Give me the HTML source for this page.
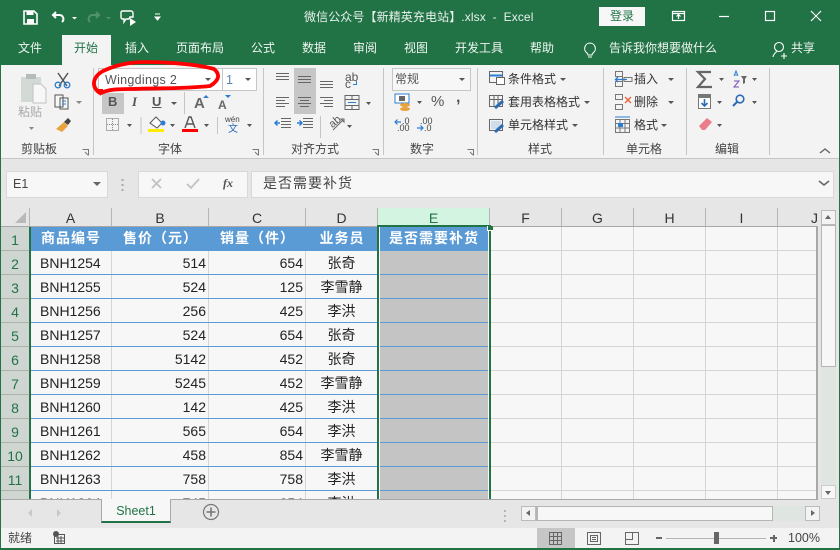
<!DOCTYPE html>
<html><head><meta charset="utf-8">
<style>
html,body{margin:0;padding:0}
#p{position:relative;width:840px;height:550px;overflow:hidden;background:#e6e6e6;font-family:"Liberation Sans","Noto Sans CJK SC",sans-serif;font-size:12px;color:#333}
#p div,#p span.a,#p svg{position:absolute}
.t{white-space:nowrap;line-height:16px}
.tab{color:#f0f5f1;top:34px;line-height:28px;font-size:12px;white-space:nowrap}
.rl{font-size:12px;color:#444;top:141px;line-height:16px;white-space:nowrap}
.sep{width:1px;background:#c6c6c6;top:68px;height:87px}
.caret{width:0;height:0;border-left:3px solid transparent;border-right:3px solid transparent;border-top:3px solid #555}
.c{font-size:14px;line-height:23px;height:23px;color:#222;white-space:nowrap}
.ch{font-size:14px;letter-spacing:1px;line-height:23px;height:23px;color:#fff;font-weight:bold;text-align:center;background:#5b9bd5;top:227px;white-space:nowrap}
.r{text-align:right}.m{text-align:center}
.hl{left:30px;height:1px;width:460px;background:#5b9bd5}
.gl{left:490px;height:1px;width:327px;background:#d6d6d6}
.vl{width:1px;top:227px;height:272px;background:#d6d6d6}
.cl{top:208px;height:18px;line-height:21px;font-size:14px;color:#333;text-align:center;background:#e6e6e6;border-right:1px solid #b5b5b5;box-sizing:content-box}
.rh{left:1px;width:28px;height:23px;line-height:27px;font-size:14px;color:#217346;text-align:center;background:#cfd6d2;border-bottom:1px solid #aab3ae}
</style></head><body>
<div id="p">
<!-- title bar -->
<div style="left:0;top:0;width:840px;height:65px;background:#217346"></div>
<svg style="left:0;top:0" width="170" height="30" viewBox="0 0 170 30" fill="none">
<path d="M24 11h10l3 3v10H24z" stroke="#fff" stroke-width="1.6"/><rect x="26.500" y="11" width="7" height="4" fill="#fff"/><rect x="27" y="19" width="7" height="5" fill="#fff"/>
<path d="M56 12l-3 3 3 3M53 15h6a4 4 0 0 1 3 7" stroke="#fff" stroke-width="2"/><path d="M72 17h5l-2.500 2.500z" fill="#fff"/>
<path d="M96 12l3 3-3 3M99 15h-6a4 4 0 0 0-3 7" stroke="#4f9270" stroke-width="2"/><path d="M106 17h5l-2.500 2.500z" fill="#4f9270"/>
<path d="M122 11h9a2 2 0 0 1 2 2v4h-3l-1 2h-3l-2 3v-3h-2a2 2 0 0 1-1-2v-5z" stroke="#fff" stroke-width="1.400"/><path d="M130 18l6 4-6 4z" fill="#fff"/>
<path d="M155 14h5M155 17h5l-2.500 3z" stroke="#fff" stroke-width="1" fill="#fff"/>
</svg>
<div class="t" style="left:304px;top:9px;color:#e8f1ec;font-size:12px;letter-spacing:.1px">微信公众号【新精英充电站】.xlsx&nbsp; -&nbsp; Excel</div>
<div style="left:599px;top:7px;width:46px;height:19px;background:#f7f7f7;color:#217346;text-align:center;line-height:19px;font-size:12px">登录</div>
<svg style="left:660px;top:0" width="180" height="30" viewBox="0 0 180 30" fill="none" stroke="#fff" stroke-width="1.200">
<rect x="12.500" y="11.500" width="12" height="9"/><path d="M12.500 13.500h12M18.500 19v-4M16.500 16.500l2-2 2 2"/>
<path d="M59 16.500h10"/><rect x="105.500" y="11.500" width="9" height="9"/><path d="M151 11l10 10M161 11l-10 10"/>
</svg>
<!-- tabs -->
<div style="left:62px;top:35px;width:49px;height:30px;background:#f3f3f3"></div>
<div class="tab" style="left:18px">文件</div>
<div class="tab" style="left:74px;color:#217346">开始</div>
<div class="tab" style="left:125px">插入</div>
<div class="tab" style="left:176px">页面布局</div>
<div class="tab" style="left:251px">公式</div>
<div class="tab" style="left:302px">数据</div>
<div class="tab" style="left:353px">审阅</div>
<div class="tab" style="left:404px">视图</div>
<div class="tab" style="left:455px">开发工具</div>
<div class="tab" style="left:530px">帮助</div>
<svg style="left:580px;top:40px" width="20" height="20" viewBox="0 0 20 20" fill="none" stroke="#fff" stroke-width="1.100"><path d="M10 3a5.500 5.500 0 0 0-3 10c.8.700 1 1.500 1 2h4c0-.5.200-1.300 1-2a5.500 5.500 0 0 0-3-10zM8 17h4"/></svg>
<div class="tab" style="left:609px">告诉我你想要做什么</div>
<svg style="left:770px;top:40px" width="20" height="20" viewBox="0 0 20 20" fill="none" stroke="#fff" stroke-width="1.100"><circle cx="9" cy="7" r="4.500"/><path d="M3 17c.5-3 3-5 4-5.500M11 16h6M14 13v6"/></svg>
<div class="tab" style="left:791px">共享</div>
<!-- ribbon -->
<div style="left:1px;top:65px;width:838px;height:93px;background:#f3f3f3;border-bottom:1px solid #c6c6c6"></div>
<div class="sep" style="left:93px"></div><div class="sep" style="left:263px"></div><div class="sep" style="left:383px"></div><div class="sep" style="left:477px"></div><div class="sep" style="left:603px"></div><div class="sep" style="left:686px"></div><div class="sep" style="left:769px"></div>
<!-- clipboard -->
<svg style="left:0;top:65px" width="95" height="75" viewBox="0 0 95 75" fill="none">
<rect x="21" y="12" width="20" height="25" fill="#d3d9d5"/><rect x="26" y="9" width="10" height="5" fill="#b6bdb8"/><path d="M33 19h8l5 5v14H33z" fill="#f7f7f7" stroke="#c2c2c2"/>
<path d="M58 8l9 13M68 8l-9 13" stroke="#555" stroke-width="1.500"/><circle cx="58" cy="20" r="2.800" stroke="#2b7cd3" stroke-width="1.300"/><circle cx="67" cy="20" r="2.800" stroke="#2b7cd3" stroke-width="1.300"/>
<path d="M55 30h8v12h-8zM60 33h8v11h-8z" fill="#f7f7f7" stroke="#555"/><path d="M62 36h4M62 39h4" stroke="#2b7cd3"/>
<path d="M56 64l8-7 4 4-6 6z" fill="#e8a33d"/><path d="M64 57l4-4 3 3-3 4z" fill="#444"/>
<path d="M76 36h6l-3 3zM29 62h5l-2.500 3z" fill="#888"/>
</svg>
<div class="t" style="left:18px;top:104px;color:#a8a8a8">粘贴</div>
<div class="rl" style="left:21px">剪贴板</div>
<!-- font -->
<div style="left:98px;top:68px;width:123px;height:21px;background:#fff;border:1px solid #c6c6c6"></div>
<div style="left:222px;top:68px;width:33px;height:21px;background:#fff;border:1px solid #c6c6c6"></div>
<div class="t" style="left:105px;top:72px;font-size:12.500px;color:#555;letter-spacing:.3px">Wingdings 2</div>
<div class="t" style="left:226px;top:72px;font-size:12.500px;color:#5a7fb0">1</div>
<div class="caret" style="left:205px;top:78px"></div><div class="caret" style="left:245px;top:78px"></div>
<div style="left:102px;top:93px;width:22px;height:21px;background:#c6c6c6"></div>
<div class="t" style="left:108px;top:94px;font-weight:bold;font-size:13px;color:#555">B</div>
<div class="t" style="left:132px;top:94px;font-style:italic;font-size:13px;font-family:'Liberation Serif',serif;font-weight:bold;color:#555">I</div>
<div class="t" style="left:152px;top:94px;font-weight:bold;font-size:13px;color:#555;text-decoration:underline">U</div>
<div class="caret" style="left:171px;top:102px"></div>
<div style="left:184px;top:92px;width:1px;height:22px;background:#c6c6c6"></div>
<div class="t" style="left:194px;top:96px;font-size:15px;font-weight:bold;color:#666">A</div><div class="t" style="left:218px;top:97px;font-size:12px;font-weight:bold;color:#666">A</div>
<svg style="left:0;top:90px" width="260" height="50" viewBox="0 0 260 50" fill="none">
<path d="M203 8h6l-3-3zM225 5h6l-3 3z" fill="#2b7cd3"/>
<rect x="106.500" y="28.500" width="12" height="12" stroke="#666" stroke-dasharray="1 1"/><path d="M112.500 29v12M107 34.500h12" stroke="#888" stroke-dasharray="1 1"/>
<path d="M127 34h5l-2.500 3zM170 34h5l-2.500 3zM204 34h5l-2.500 3zM247 34h5l-2.500 3z" fill="#555"/>
<path d="M150 33l6-6 6 6-5 5z" fill="#fff" stroke="#555"/><circle cx="163" cy="33" r="2.500" fill="#2b7cd3"/><rect x="148" y="39" width="16" height="3" fill="#ffec00"/>
<rect x="182" y="39" width="16" height="3" fill="#f00"/><path d="M185 38l4-11h2l4 11M187 34h6" stroke="#555" stroke-width="1.400"/>
<path d="M141 27v17M217.500 27v17" stroke="#c6c6c6"/>
</svg>
<div class="t" style="left:225px;top:115px;font-size:8px;color:#444;line-height:10px">wén</div>
<div class="t" style="left:228px;top:124px;font-size:10px;color:#2b6cb5;line-height:12px">文</div>
<div class="rl" style="left:158px">字体</div>
<!-- red oval -->
<svg style="left:90px;top:56px" width="150" height="44" viewBox="0 0 150 44" fill="none"><path d="M10 37C2 32 1 22 13 15C28 8 42 6 55 6C82 6 110 9 124 13C130 18 130 24 120 30C92 33 65 32 42 33C28 33 18 33 9 38" stroke="#f00" stroke-width="3.800"/><path d="M5 33h8v5H8z" fill="#f00"/></svg>
<!-- align -->
<div style="left:294px;top:68px;width:22px;height:46px;background:#c6c6c6"></div>
<svg style="left:270px;top:66px" width="115" height="72" viewBox="0 0 115 72" fill="none" stroke="#666">
<path d="M6 7.500h13M6 10.500h13M6 13.500h13M28 10.500h13M28 13.500h13M28 16.500h13M50 15.500h13M50 18.500h13M50 21.500h13"/>
<path d="M6 31.500h13M6 34.500h9M6 37.500h13M6 40.500h9M28 31.500h13M30 34.500h9M28 37.500h13M30 40.500h9M50 31.500h13M54 34.500h9M50 37.500h13M54 40.500h9"/>
<rect x="75" y="29.500" width="14" height="14"/><path d="M75 33.500h14M75 39.500h14M82 29.500v4M82 39.500v4"/><path d="M78 36.500h8" stroke="#2b7cd3"/>
<path d="M96 36h5l-2.500 3z" fill="#555" stroke="none"/>
<path d="M11 52.500h10M11 55.500h10M11 58.500h10M11 61.500h10M33 52.500h10M33 55.500h10M33 58.500h10M33 61.500h10"/>
<path d="M5 57h5M7.500 54.500L5 57l2.500 2.500M27 57h5M29.500 54.500L32 57l-2.500 2.500" stroke="#2b7cd3" stroke-width="1.500"/>
<path d="M50.500 50v22" stroke="#c6c6c6"/><path d="M63 64l10-10M74 53l-3 0 3 3z" stroke="#666"/>
<path d="M77 59h5l-2.500 3z" fill="#555" stroke="none"/>
</svg>
<div class="t" style="left:345px;top:71px;font-size:12px;color:#555;line-height:12px">ab</div>
<div class="t" style="left:345px;top:79px;font-size:12px;color:#555;line-height:10px">c</div>
<div style="left:353px;top:81px;width:3px;height:3px;border-right:1px solid #2b7cd3;border-bottom:1px solid #2b7cd3"></div>
<div class="t" style="left:329px;top:116px;font-size:11px;color:#555;transform:rotate(-40deg);line-height:12px">ab</div>
<div class="rl" style="left:291px">对齐方式</div>
<!-- number -->
<div style="left:392px;top:68px;width:77px;height:21px;background:#f7f7f7;border:1px solid #c6c6c6"></div>
<div class="t" style="left:395px;top:71px;color:#555">常规</div>
<div class="caret" style="left:459px;top:78px"></div>
<svg style="left:390px;top:90px" width="85" height="45" viewBox="0 0 85 45" fill="none">
<rect x="5" y="4" width="14" height="9" fill="#fff" stroke="#2b7cd3"/><rect x="9" y="6" width="6" height="5" fill="#666"/><ellipse cx="15" cy="15" rx="5" ry="2" fill="#e8a33d"/><ellipse cx="15" cy="19" rx="5" ry="2" fill="#e8a33d"/>
<path d="M27 11h5l-2.500 3z" fill="#555"/>
<path d="M11 32H5M7.500 29.500L5 32l2.500 2.500" stroke="#2b7cd3" stroke-width="1.200"/><path d="M27 38h6M30.500 35.500L33 38l-2.500 2.500" stroke="#2b7cd3" stroke-width="1.200"/>
</svg>
<div class="t" style="left:431px;top:94px;font-size:15px;color:#555;line-height:16px">%</div>
<div class="t" style="left:456px;top:90px;font-size:16px;font-weight:bold;color:#555;line-height:16px">,</div>
<div class="t" style="left:402px;top:117px;font-size:9px;color:#444;line-height:8px">.0</div>
<div class="t" style="left:397px;top:124px;font-size:9px;color:#444;line-height:8px">.00</div>
<div class="t" style="left:420px;top:117px;font-size:9px;color:#444;line-height:8px">.00</div>
<div class="t" style="left:424px;top:124px;font-size:9px;color:#444;line-height:8px">.0</div>
<div class="rl" style="left:410px">数字</div>
<!-- corner launchers -->
<svg style="left:0;top:145px" width="680" height="12" viewBox="0 0 680 12" fill="none" stroke="#777"><path d="M82.500 4.500h6v6M85 7l3 3M252.500 4.500h6v6M255 7l3 3M372.500 4.500h6v6M375 7l3 3M467.500 4.500h6v6M470 7l3 3"/></svg>
<!-- styles -->
<svg style="left:488px;top:70px" width="20" height="66" viewBox="0 0 20 66" fill="none" stroke="#666">
<rect x="1.500" y="1.500" width="13" height="11"/><path d="M1.500 5.500h13" stroke="#2b7cd3" stroke-width="2"/><rect x="8.500" y="7.500" width="8" height="7" fill="#fff"/>
<rect x="1.500" y="25.500" width="13" height="11"/><path d="M1.500 29.500h13M6 25v11M10 25v11"/><path d="M7 38l8-7" stroke="#2b6cb5" stroke-width="3"/>
<rect x="1.500" y="49.500" width="13" height="11"/><rect x="3" y="51" width="10" height="8" fill="#cfdcea" stroke="none"/><path d="M7 62l8-7" stroke="#2b6cb5" stroke-width="3"/>
</svg>
<div class="t" style="left:508px;top:71px">条件格式</div><div class="caret" style="left:560px;top:78px"></div>
<div class="t" style="left:508px;top:94px">套用表格格式</div><div class="caret" style="left:584px;top:101px"></div>
<div class="t" style="left:508px;top:117px">单元格样式</div><div class="caret" style="left:572px;top:124px"></div>
<div class="rl" style="left:528px">样式</div>
<!-- cells -->
<svg style="left:612px;top:70px" width="22" height="66" viewBox="0 0 22 66" fill="none" stroke="#777">
<path d="M3.500 1.500h7v5h-7zM3.500 11.500h7v5h-7zM3.500 11.500v5h7M10.500 6.500v5M12 7.500h8v4h-8z"/><path d="M15 9.500H3M6 7L3.500 9.500 6 12" stroke="#2b7cd3" stroke-width="1.300"/>
<path d="M3.500 24.500h7v5h-7zM3.500 34.500h7v5h-7z"/><path d="M13 27l6 6M19 27l-6 6" stroke="#e8663d" stroke-width="1.400"/>
<rect x="3.500" y="49.500" width="14" height="13"/><path d="M3.500 53.500h14M3.500 58h14M8 50v13M13 50v13"/><rect x="6" y="53" width="5" height="4" fill="#2b7cd3" stroke="none"/><path d="M3 47h15" stroke="#2b7cd3"/>
</svg>
<div class="t" style="left:634px;top:71px">插入</div><div class="caret" style="left:668px;top:78px"></div>
<div class="t" style="left:634px;top:94px">删除</div><div class="caret" style="left:668px;top:101px"></div>
<div class="t" style="left:634px;top:117px">格式</div><div class="caret" style="left:661px;top:124px"></div>
<div class="rl" style="left:626px">单元格</div>
<!-- editing -->
<svg style="left:694px;top:68px" width="70" height="68" viewBox="0 0 70 68" fill="none">
<path d="M17 4H4l7 7-7 8h14" stroke="#666" stroke-width="2.200"/>
<path d="M25 10h5l-2.500 3zM23 33h5l-2.500 3zM23 56h5l-2.500 3zM58 10h5l-2.500 3zM58 33h5l-2.500 3z" fill="#555"/>
<path d="M40 8l2-5 2 5M41 7h2" stroke="#2b7cd3"/><path d="M40 13h5l-5 6h5" stroke="#7a4fb5"/><path d="M47 8h6l-2 3v4l-2 1v-5z" fill="#666"/>
<rect x="4.500" y="26.500" width="12" height="14" fill="#fff" stroke="#777"/><rect x="4" y="26" width="13" height="4" fill="#777"/><path d="M10.500 31v7M7.500 35l3 3 3-3" stroke="#2b6cb5" stroke-width="1.600"/>
<circle cx="46" cy="31" r="3.800" stroke="#2b6cb5" stroke-width="1.600"/><path d="M43 34l-4 4" stroke="#2b6cb5" stroke-width="2"/>
<path d="M5 58l8-8 5 4-7 8H8z" fill="#ee7d8c"/>
</svg>
<div class="rl" style="left:715px">编辑</div>
<svg style="left:818px;top:146px" width="14" height="10" viewBox="0 0 14 10" fill="none"><path d="M2 7l5-4 5 4" stroke="#666" stroke-width="1.400"/></svg>
<!-- formula bar -->
<div style="left:1px;top:159px;width:838px;height:49px;background:#e6e6e6"></div>
<div style="left:6px;top:171px;width:100px;height:25px;background:#f7f7f7;border:1px solid #d8d8d8"></div>
<div class="t" style="left:13px;top:176px;color:#444;font-size:12.500px">E1</div>
<div style="left:93px;top:182px;width:0;height:0;border-left:4px solid transparent;border-right:4px solid transparent;border-top:4px solid #666"></div>
<svg style="left:120px;top:176px" width="8" height="18" viewBox="0 0 8 18"><path d="M2.500 3v2M2.500 8v2M2.500 13v2" stroke="#aaa" stroke-width="2"/></svg>
<div style="left:138px;top:171px;width:108px;height:25px;background:#f7f7f7;border:1px solid #d8d8d8"></div>
<svg style="left:148px;top:175px" width="70" height="18" viewBox="0 0 70 18" fill="none" stroke="#c2c2c2" stroke-width="1.800"><path d="M4 4l9 9M13 4l-9 9M39 9l4 4 8-9"/></svg>
<div class="t" style="left:223px;top:175px;font-family:'Liberation Serif',serif;font-style:italic;font-weight:bold;font-size:12px;color:#555">fx</div>
<div style="left:251px;top:171px;width:581px;height:25px;background:#f7f7f7;border:1px solid #d8d8d8"></div>
<div class="t" style="left:263px;top:175px;color:#444;font-size:14px;letter-spacing:1px">是否需要补货</div>
<svg style="left:817px;top:178px" width="14" height="10" viewBox="0 0 14 10" fill="none"><path d="M2 3l5 4 5-4" stroke="#666" stroke-width="1.600"/></svg>
<!-- sheet -->
<div style="left:1px;top:208px;width:816px;height:291px;background:#f7f7f7"></div>
<div style="left:1px;top:208px;width:28px;height:18px;background:#e6e6e6;border-right:1px solid #b5b5b5"></div>
<div style="left:15px;top:212px;width:0;height:0;border-left:11px solid transparent;border-bottom:11px solid #b9b9b9"></div>
<div class="cl" style="left:30px;width:81px">A</div>
<div class="cl" style="left:112px;width:96px">B</div>
<div class="cl" style="left:209px;width:96px">C</div>
<div class="cl" style="left:306px;width:71px">D</div>
<div class="cl" style="left:378px;width:111px;background:#d2f4e0;color:#217346">E</div>
<div class="cl" style="left:490px;width:71px">F</div>
<div class="cl" style="left:562px;width:71px">G</div>
<div class="cl" style="left:634px;width:71px">H</div>
<div class="cl" style="left:706px;width:71px">I</div>
<div class="cl" style="left:778px;width:39px;text-align:left;text-indent:33px;border-right:0;overflow:hidden">J</div>
<div style="left:1px;top:226px;width:816px;height:1px;background:#a8a8a8"></div>
<div class="rh" style="top:227px">1</div><div class="rh" style="top:251px">2</div><div class="rh" style="top:275px">3</div><div class="rh" style="top:299px">4</div><div class="rh" style="top:323px">5</div><div class="rh" style="top:347px">6</div><div class="rh" style="top:371px">7</div><div class="rh" style="top:395px">8</div><div class="rh" style="top:419px">9</div><div class="rh" style="top:443px">10</div><div class="rh" style="top:467px">11</div>
<div class="rh" style="top:491px;height:8px;border:0"></div>
<!-- grid -->
<div class="vl" style="left:111px"></div><div class="vl" style="left:208px"></div><div class="vl" style="left:305px"></div>
<div class="vl" style="left:561px"></div><div class="vl" style="left:633px"></div><div class="vl" style="left:705px"></div><div class="vl" style="left:777px"></div>
<div class="gl" style="top:250px"></div><div class="gl" style="top:274px"></div><div class="gl" style="top:298px"></div><div class="gl" style="top:322px"></div><div class="gl" style="top:346px"></div><div class="gl" style="top:370px"></div><div class="gl" style="top:394px"></div><div class="gl" style="top:418px"></div><div class="gl" style="top:442px"></div><div class="gl" style="top:466px"></div><div class="gl" style="top:490px"></div>
<div style="left:379px;top:251px;width:110px;height:248px;background:#c4c4c4"></div>
<div class="hl" style="top:250px"></div><div class="hl" style="top:274px"></div><div class="hl" style="top:298px"></div><div class="hl" style="top:322px"></div><div class="hl" style="top:346px"></div><div class="hl" style="top:370px"></div><div class="hl" style="top:394px"></div><div class="hl" style="top:418px"></div><div class="hl" style="top:442px"></div><div class="hl" style="top:466px"></div><div class="hl" style="top:490px"></div>
<div class="ch" style="left:30px;width:82px">商品编号</div>
<div class="ch" style="left:112px;width:97px">售价（元）</div>
<div class="ch" style="left:209px;width:97px">销量（件）</div>
<div class="ch" style="left:306px;width:72px">业务员</div>
<div class="ch" style="left:378px;width:112px">是否需要补货</div>
<!-- data -->
<div class="c" style="left:40px;top:252px">BNH1254</div><div class="c r" style="left:112px;width:94px;top:252px">514</div><div class="c r" style="left:209px;width:94px;top:252px">654</div><div class="c m" style="left:306px;width:71px;top:252px">张奇</div>
<div class="c" style="left:40px;top:276px">BNH1255</div><div class="c r" style="left:112px;width:94px;top:276px">524</div><div class="c r" style="left:209px;width:94px;top:276px">125</div><div class="c m" style="left:306px;width:71px;top:276px">李雪静</div>
<div class="c" style="left:40px;top:300px">BNH1256</div><div class="c r" style="left:112px;width:94px;top:300px">256</div><div class="c r" style="left:209px;width:94px;top:300px">425</div><div class="c m" style="left:306px;width:71px;top:300px">李洪</div>
<div class="c" style="left:40px;top:324px">BNH1257</div><div class="c r" style="left:112px;width:94px;top:324px">524</div><div class="c r" style="left:209px;width:94px;top:324px">654</div><div class="c m" style="left:306px;width:71px;top:324px">张奇</div>
<div class="c" style="left:40px;top:348px">BNH1258</div><div class="c r" style="left:112px;width:94px;top:348px">5142</div><div class="c r" style="left:209px;width:94px;top:348px">452</div><div class="c m" style="left:306px;width:71px;top:348px">张奇</div>
<div class="c" style="left:40px;top:372px">BNH1259</div><div class="c r" style="left:112px;width:94px;top:372px">5245</div><div class="c r" style="left:209px;width:94px;top:372px">452</div><div class="c m" style="left:306px;width:71px;top:372px">李雪静</div>
<div class="c" style="left:40px;top:396px">BNH1260</div><div class="c r" style="left:112px;width:94px;top:396px">142</div><div class="c r" style="left:209px;width:94px;top:396px">425</div><div class="c m" style="left:306px;width:71px;top:396px">李洪</div>
<div class="c" style="left:40px;top:420px">BNH1261</div><div class="c r" style="left:112px;width:94px;top:420px">565</div><div class="c r" style="left:209px;width:94px;top:420px">654</div><div class="c m" style="left:306px;width:71px;top:420px">李洪</div>
<div class="c" style="left:40px;top:444px">BNH1262</div><div class="c r" style="left:112px;width:94px;top:444px">458</div><div class="c r" style="left:209px;width:94px;top:444px">854</div><div class="c m" style="left:306px;width:71px;top:444px">李雪静</div>
<div class="c" style="left:40px;top:468px">BNH1263</div><div class="c r" style="left:112px;width:94px;top:468px">758</div><div class="c r" style="left:209px;width:94px;top:468px">758</div><div class="c m" style="left:306px;width:71px;top:468px">李洪</div>
<div class="c" style="left:40px;top:492px">BNH1264</div><div class="c r" style="left:112px;width:94px;top:492px">745</div><div class="c r" style="left:209px;width:94px;top:492px">254</div><div class="c m" style="left:306px;width:71px;top:492px">李洪</div>
<!-- A column left green edge and selection -->
<div style="left:29px;top:227px;width:2px;height:272px;background:#217346"></div>
<div style="left:377px;top:225px;width:114px;height:276px;border:2px solid #217346;box-sizing:border-box;border-bottom:0"></div>
<div style="left:379px;top:227px;width:1px;height:272px;background:#fff"></div>
<div style="left:488px;top:227px;width:1px;height:272px;background:#fff"></div>
<div style="left:487px;top:226px;width:6px;height:5px;background:#217346;border-bottom:1px solid #fff;border-left:1px solid #fff;box-sizing:border-box"></div>
<!-- vertical scrollbar -->
<div style="left:817px;top:208px;width:22px;height:291px;background:#e6e6e6"></div>
<div style="left:816px;top:226px;width:2px;height:273px;background:#a8a8a8"></div>
<div style="left:821px;top:225px;width:15px;height:142px;background:#f7f7f7;border:1px solid #b5b5b5;box-sizing:border-box"></div>
<div style="left:821px;top:367px;width:15px;height:118px;background:#dfe6e1"></div>
<div style="left:821px;top:210px;width:15px;height:15px;background:#f3f3f3;border:1px solid #bbb;box-sizing:border-box"></div>
<div style="left:825px;top:215px;width:0;height:0;border-left:3.500px solid transparent;border-right:3.500px solid transparent;border-bottom:4px solid #666"></div>
<div style="left:821px;top:485px;width:15px;height:14px;background:#f7f7f7;border:1px solid #ccc;box-sizing:border-box"></div>
<div style="left:825px;top:491px;width:0;height:0;border-left:3.500px solid transparent;border-right:3.500px solid transparent;border-top:4px solid #666"></div>
<div style="left:1px;top:499px;width:817px;height:1px;background:#a8a8a8"></div>
<!-- sheet tabs -->
<div style="left:1px;top:500px;width:838px;height:28px;background:#e6e6e6"></div>
<div style="left:28px;top:509px;width:0;height:0;border-top:4px solid transparent;border-bottom:4px solid transparent;border-right:4px solid #c8c8c8"></div>
<div style="left:57px;top:509px;width:0;height:0;border-top:4px solid transparent;border-bottom:4px solid transparent;border-left:4px solid #c8c8c8"></div>
<div style="left:101px;top:499px;width:68px;height:22px;background:#f7f7f7;border-left:1px solid #a8a8a8;border-right:1px solid #a8a8a8;border-bottom:2px solid #217346;color:#217346;text-align:center;line-height:24px;font-size:12.500px">Sheet1</div>
<svg style="left:202px;top:503px" width="18" height="18" viewBox="0 0 18 18" fill="none" stroke="#777"><circle cx="9" cy="9" r="7.500" stroke-width="1.200"/><path d="M9 4.500v9M4.500 9h9" stroke-width="1.600"/></svg>
<svg style="left:502px;top:507px" width="6" height="18" viewBox="0 0 6 18"><path d="M3 3v2M3 8v2M3 13v2" stroke="#b5b5b5" stroke-width="2"/></svg>
<div style="left:521px;top:506px;width:252px;height:15px;background:#f7f7f7;border:1px solid #b5b5b5;box-sizing:border-box"></div>
<div style="left:773px;top:506px;width:33px;height:15px;background:#dfe6e1"></div>
<div style="left:521px;top:506px;width:15px;height:15px;background:#f3f3f3;border:1px solid #bbb;box-sizing:border-box"></div>
<div style="left:526px;top:510px;width:0;height:0;border-top:3.500px solid transparent;border-bottom:3.500px solid transparent;border-right:4px solid #666"></div>
<div style="left:536px;top:506px;width:2px;height:15px;background:#b5b5b5"></div>
<div style="left:805px;top:506px;width:15px;height:15px;background:#f3f3f3;border:1px solid #bbb;box-sizing:border-box"></div>
<div style="left:811px;top:510px;width:0;height:0;border-top:3.500px solid transparent;border-bottom:3.500px solid transparent;border-left:4px solid #666"></div>
<!-- status -->
<div style="left:1px;top:528px;width:838px;height:20px;background:#f3f3f3"></div>
<div class="t" style="left:8px;top:530px;font-size:12px;color:#444">就绪</div>
<svg style="left:50px;top:530px" width="17" height="16" viewBox="0 0 17 16" fill="none"><circle cx="6" cy="4" r="3" fill="#555"/><rect x="4.500" y="4.500" width="10" height="9" stroke="#555"/><path d="M6 8h8M6 11h8M8 6v7M11 6v7" stroke="#555"/></svg>
<div style="left:537px;top:528px;width:38px;height:20px;background:#c6c6c6"></div>
<svg style="left:545px;top:530px" width="170" height="16" viewBox="0 0 170 16" fill="none" stroke="#666">
<path d="M4.500 2.500h12v12h-12zM4.500 6.500h12M4.500 10.500h12M8.500 2.500v12M12.500 2.500v12"/>
<path d="M42.500 2.500h13v12h-13zM45.500 5.500h7v6h-7zM47 7.500h4M47 9.500h4"/>
<path d="M80.500 2.500h13v12h-13zM80.500 9.500h7v-7"/>
</svg>
<div style="left:656px;top:537px;width:6px;height:2px;background:#666"></div>
<div style="left:666px;top:538px;width:100px;height:1px;background:#b5b5b5"></div>
<div style="left:714px;top:532px;width:5px;height:12px;background:#666"></div>
<div style="left:770px;top:537px;width:7px;height:2px;background:#666"></div>
<div style="left:772.500px;top:534.500px;width:2px;height:7px;background:#666"></div>
<div class="t" style="left:788px;top:530px;font-size:12.500px;color:#444">100%</div>
<!-- window edges -->
<div style="left:0;top:65px;width:1px;height:485px;background:#217346"></div>
<div style="left:839px;top:65px;width:1px;height:485px;background:#217346"></div>
<div style="left:0;top:548px;width:840px;height:2px;background:#217346"></div>
</div>
</body></html>
